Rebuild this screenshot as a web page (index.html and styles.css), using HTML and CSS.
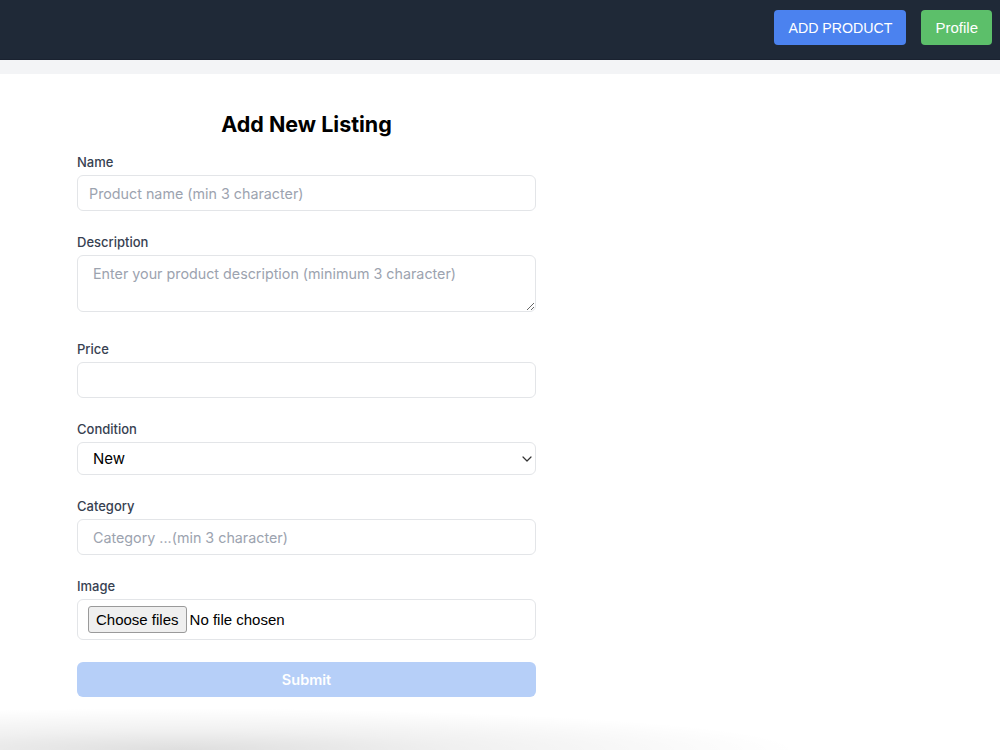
FILE: index.html
```html
<!DOCTYPE html>
<html lang="en">
<head>
    <meta charset="UTF-8">
    <meta name="viewport" content="width=device-width, initial-scale=1.0">
    <title>Add New Listing</title>
    <link rel="stylesheet" href="styles.css">
</head>
<body>
<header class="topbar">
    <button class="btn-add">ADD PRODUCT</button>
    <button class="btn-profile">Profile</button>
</header>

<main class="page">
    <section class="sheet">
        <form class="listing-form" onsubmit="return false">
            <h1 class="form-title">Add New Listing</h1>

            <div class="field">
                <label for="name">Name</label>
                <input type="text" id="name" class="input input-name" placeholder="Product name (min 3 character)">
            </div>

            <div class="field field-tall">
                <label for="description">Description</label>
                <textarea id="description" class="input textarea" placeholder="Enter your product description (minimum 3 character)"></textarea>
            </div>

            <div class="field">
                <label for="price">Price</label>
                <input type="number" id="price" class="input">
            </div>

            <div class="field">
                <label for="condition">Condition</label>
                <div class="select-wrap">
                    <select id="condition" class="input select">
                        <option value="new" selected>New</option>
                        <option value="used">Used</option>
                    </select>
                    <svg class="chevron" width="10" height="6" viewBox="0 0 10 6"><path d="M1 1 L5 5 L9 1" fill="none" stroke="#333" stroke-width="1.2" stroke-linecap="round" stroke-linejoin="round"/></svg>
                </div>
            </div>

            <div class="field">
                <label for="category">Category</label>
                <input type="text" id="category" class="input input-wide" placeholder="Category ...(min 3 character)">
            </div>

            <div class="field">
                <label for="image">Image</label>
                <div class="file-box">
                    <label for="image" class="file-btn">Choose files</label>
                    <span class="file-name">No file chosen</span>
                    <input type="file" id="image" class="file-hidden" multiple>
                </div>
            </div>

            <button type="submit" class="btn-submit" disabled>Submit</button>
        </form>
    </section>
</main>
</body>
</html>
```

FILE: styles.css
```css
body {
    margin: 0;
    font-family: Inter, "Liberation Sans", sans-serif;
    background-color: #fff;
    color: #000;
}
.topbar {
    display: flex;
    justify-content: flex-end;
    align-items: flex-start;
    gap: 15px;
    height: 60px;
    box-sizing: border-box;
    padding: 10px 8px 0 0;
    background-color: #1f2937;
    border-bottom: 1px solid #1a2230;
}
.topbar button {
    height: 35px;
    padding: 0 14px;
    border: none;
    border-radius: 4px;
    color: #fff;
    font-family: "Liberation Sans", Arial, sans-serif;
    font-size: 15px;
    cursor: pointer;
}
.btn-add {
    padding: 0 13px;
    font-size: 14.2px !important;
    background-color: #4b82ef;
}
.btn-profile {
    background-color: #5cbf6a;
}
.page {
    padding-top: 14px;
    background-color: #f3f4f6;
}
.sheet {
    height: 676px;
    box-sizing: border-box;
    padding: 36px 0 0 77px;
    background-color: #fff;
    background-image: radial-gradient(ellipse 620px 42px at 180px 100%, rgba(0, 0, 0, 0.13), rgba(0, 0, 0, 0.06) 45%, rgba(0, 0, 0, 0) 100%);
}
.listing-form {
    width: 459px;
}
.form-title {
    margin: 0 0 15px;
    font-size: 21.5px;
    line-height: 28px;
    font-weight: 700;
    text-align: center;
}
.field {
    margin-bottom: 22px;
}
.field-tall {
    margin-bottom: 28px;
}
.field > label {
    display: block;
    margin-bottom: 4px;
    font-size: 13px;
    line-height: 18px;
    font-weight: 500;
    color: #374151;
}
.input {
    display: block;
    width: 100%;
    height: 36px;
    box-sizing: border-box;
    padding: 0 11px;
    border: 1px solid #e3e5e8;
    border-radius: 6px;
    background-color: #fff;
    font-family: Inter, "Liberation Sans", sans-serif;
    font-size: 14.3px;
    color: #111;
    outline: none;
}
.input::placeholder {
    color: #9ca3af;
}
.input-wide {
    padding: 0 15px;
}
.textarea {
    height: 57px;
    padding: 8px 15px;
    resize: vertical;
    line-height: 20px;
}
.select-wrap {
    position: relative;
}
.select {
    height: 33px;
    padding: 0 15px;
    appearance: none;
    -webkit-appearance: none;
    font-size: 15px;
    color: #000;
}
.chevron {
    position: absolute;
    right: 4px;
    top: 14px;
    pointer-events: none;
}
.file-box {
    display: flex;
    align-items: center;
    gap: 3px;
    height: 41px;
    box-sizing: border-box;
    padding: 0 10px;
    border: 1px solid #e3e5e8;
    border-radius: 6px;
}
.file-btn {
    display: block;
    height: 27px;
    box-sizing: border-box;
    padding: 0 7px;
    border: 1px solid #9a9a9a;
    border-radius: 3px;
    background-color: #efefef;
    font-family: "Liberation Sans", Arial, sans-serif;
    font-size: 15px;
    line-height: 25px;
    color: #000;
    cursor: pointer;
}
.file-name {
    font-family: "Liberation Sans", Arial, sans-serif;
    font-size: 15px;
}
.file-hidden {
    display: none;
}
.btn-submit {
    display: block;
    width: 100%;
    height: 35px;
    border: none;
    border-radius: 6px;
    background-color: #b6cff8;
    color: #fff;
    font-family: Inter, "Liberation Sans", sans-serif;
    font-size: 14.5px;
    font-weight: 600;
}
```
